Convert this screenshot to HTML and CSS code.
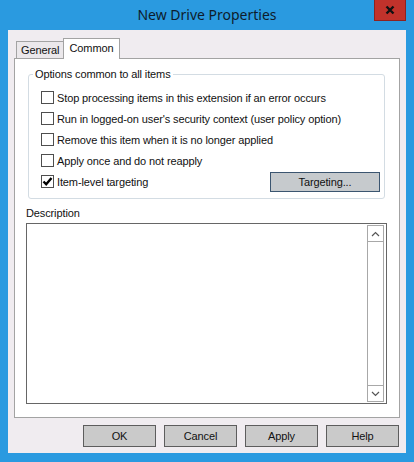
FILE: index.html
```html
<!DOCTYPE html>
<html>
<head>
<meta charset="utf-8">
<link rel="stylesheet" href="styles.css">
</head>
<body>
<div class="window">
  <div class="titlebar">
    <div class="tb-spacer"></div>
    <div class="title">New Drive Properties</div>
    <div class="tb-controls">
      <div class="close-btn">
        <svg width="12" height="10" viewBox="0 0 12 10"><path d="M2.5 1.5 L9.5 8.5 M9.5 1.5 L2.5 8.5" stroke="#111" stroke-width="2.4" fill="none"/></svg>
      </div>
    </div>
  </div>
  <div class="client">
    <div class="tabs">
      <div class="tab">General</div>
      <div class="tab active">Common</div>
    </div>
    <div class="panel">
      <fieldset class="group">
        <legend>Options common to all items</legend>
        <div class="row"><span class="cb"></span><span>Stop processing items in this extension if an error occurs</span></div>
        <div class="row"><span class="cb"></span><span>Run in logged-on user's security context (user policy option)</span></div>
        <div class="row"><span class="cb"></span><span>Remove this item when it is no longer applied</span></div>
        <div class="row"><span class="cb"></span><span>Apply once and do not reapply</span></div>
        <div class="row last">
          <div class="check-label"><span class="cb"><svg width="11" height="11" viewBox="0 0 11 11"><path d="M1.5 5.5 L4.2 8.3 L9.5 2" stroke="#000" stroke-width="2.4" fill="none"/></svg></span><span>Item-level targeting</span></div>
          <div class="btn targeting">Targeting...</div>
        </div>
      </fieldset>
      <div class="desc-label">Description</div>
      <div class="textarea">
        <div class="ta-text"></div>
        <div class="scrollbar">
          <div class="sb-btn"><svg width="9" height="6" viewBox="0 0 9 6"><path d="M1 5 L4.5 1.5 L8 5" stroke="#555" stroke-width="1.2" fill="none"/></svg></div>
          <div class="sb-track"></div>
          <div class="sb-btn"><svg width="9" height="6" viewBox="0 0 9 6"><path d="M1 1 L4.5 4.5 L8 1" stroke="#555" stroke-width="1.2" fill="none"/></svg></div>
        </div>
      </div>
    </div>
    <div class="buttons">
      <div class="btn">OK</div>
      <div class="btn">Cancel</div>
      <div class="btn">Apply</div>
      <div class="btn">Help</div>
    </div>
  </div>
</div>
</body>
</html>
```

FILE: styles.css
```css
html, body {
  margin: 0;
  padding: 0;
}
body {
  width: 414px;
  height: 462px;
  overflow: hidden;
  font-family: "Liberation Sans", Arial, sans-serif;
  font-size: 11px;
  letter-spacing: -0.12px;
  color: #111;
}
.window {
  width: 414px;
  height: 462px;
  background: #2a9ae0;
  display: flex;
  flex-direction: column;
  box-sizing: border-box;
}
.titlebar {
  height: 30px;
  display: grid;
  grid-template-columns: 1fr auto 1fr;
  flex: none;
  letter-spacing: 0;
}
.title {
  font-family: "Noto Sans", "Open Sans", sans-serif;
  font-size: 14px;
  color: #0e1c2c;
  line-height: 30px;
}
.tb-controls {
  display: flex;
  justify-content: flex-end;
  align-items: flex-start;
  padding-right: 8px;
}
.close-btn {
  width: 32px;
  height: 21px;
  box-sizing: border-box;
  background: #c1322b;
  border: 1px solid #8e2220;
  border-top: none;
  display: flex;
  align-items: center;
  justify-content: center;
}
.client {
  margin: 0 8px;
  height: 423px;
  background: #f0ecf0;
  box-sizing: border-box;
  padding-top: 8px;
  display: flex;
  flex-direction: column;
  flex: none;
}
.tabs {
  height: 20px;
  display: flex;
  align-items: flex-end;
  padding-left: 8px;
  position: relative;
  z-index: 2;
}
.tab {
  height: 17px;
  box-sizing: border-box;
  border: 1px solid #a3a3a3;
  border-bottom: none;
  background: #ebe8eb;
  padding: 0 4px;
  line-height: 17px;
  width: 48px;
  text-align: center;
}
.tab.active {
  height: 21px;
  margin-bottom: -1px;
  background: #fff;
  width: 57px;
  margin-left: -1px;
  line-height: 17px;
  padding-top: 1px;
}
.panel {
  margin: 0 6px;
  height: 360px;
  box-sizing: border-box;
  border: 1px solid #a3a3a3;
  background: #fff;
  padding: 9px 12px 13px 11px;
  display: flex;
  flex-direction: column;
  flex: none;
}
.group {
  margin: 0 2px;
  border: 1px solid #d3dce3;
  border-radius: 3px;
  padding: 6px 4px 6px 12px;
  min-width: 0;
  height: 131px;
  box-sizing: border-box;
}
.group legend {
  padding: 0 2px;
  margin-left: -8px;
  line-height: 13px;
  height: 13px;
}
.row {
  height: 21px;
  display: flex;
  align-items: center;
}
.row.last {
  justify-content: space-between;
}
.check-label {
  display: flex;
  align-items: center;
}
.cb {
  width: 13px;
  height: 13px;
  box-sizing: border-box;
  border: 1px solid #4e4e4e;
  background: #fff;
  margin-right: 3px;
  display: flex;
  align-items: center;
  justify-content: center;
  flex: none;
}
.btn {
  width: 73px;
  height: 22px;
  box-sizing: border-box;
  background: #cacaca;
  border: 1px solid #5d5d5d;
  display: flex;
  align-items: center;
  justify-content: center;
}
.btn.targeting {
  width: 110px;
  height: 20px;
  background: #c6cacd;
  border-color: #3b5570;
}
.desc-label {
  margin-top: 8px;
  line-height: 13px;
  height: 13px;
}
.textarea {
  margin-top: 3px;
  height: 181px;
  box-sizing: border-box;
  border: 1px solid #666;
  display: flex;
  padding: 1px 2px 1px 0;
}
.ta-text {
  flex: 1;
}
.scrollbar {
  width: 17px;
  box-sizing: border-box;
  border: 1px solid #a8a8a8;
  display: flex;
  flex-direction: column;
}
.sb-btn {
  height: 16px;
  box-sizing: border-box;
  border-bottom: 1px solid #a8a8a8;
  display: flex;
  align-items: center;
  justify-content: center;
  flex: none;
}
.sb-btn:last-child {
  border-bottom: none;
  border-top: 1px solid #a8a8a8;
}
.sb-track {
  flex: 1;
}
.buttons {
  margin-top: 7px;
  display: flex;
  justify-content: flex-end;
  gap: 8px;
  padding-right: 7px;
}
```
